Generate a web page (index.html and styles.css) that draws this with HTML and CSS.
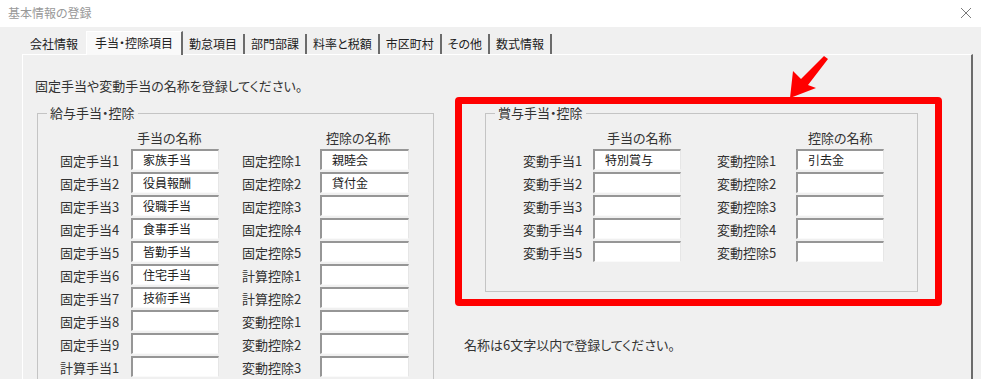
FILE: index.html
```html
<!DOCTYPE html>
<html lang="ja">
<head>
    <meta charset="UTF-8">
    <title>基本情報の登録</title>
    <link rel="stylesheet" href="styles.css">
</head>
<body>
    <div class="titlebar">
        <span class="title">基本情報の登録</span>
        <svg class="close" width="12" height="12" viewBox="0 0 12 12">
            <path d="M1 1 L11 11 M11 1 L1 11" stroke="#7a7a7a" stroke-width="1" fill="none"/>
        </svg>
    </div>

    <div class="tabs">
        <div class="tab">会社情報</div>
        <div class="tab active">手当・控除項目</div>
        <div class="tab">勤怠項目</div>
        <div class="tab">部門部課</div>
        <div class="tab">料率と税額</div>
        <div class="tab">市区町村</div>
        <div class="tab">その他</div>
        <div class="tab">数式情報</div>
    </div>

    <div class="panel">
        <div class="col-left">
            <p class="intro">固定手当や変動手当の名称を登録してください。</p>
            <fieldset class="group group-left">
                <legend>給与手当・控除</legend>
                <div class="grid">
                    <span></span><span class="head">手当の名称</span><span></span><span class="head">控除の名称</span>
                    <label>固定手当1</label><div class="field">家族手当</div><label>固定控除1</label><div class="field">親睦会</div>
                    <label>固定手当2</label><div class="field">役員報酬</div><label>固定控除2</label><div class="field">貸付金</div>
                    <label>固定手当3</label><div class="field">役職手当</div><label>固定控除3</label><div class="field"></div>
                    <label>固定手当4</label><div class="field">食事手当</div><label>固定控除4</label><div class="field"></div>
                    <label>固定手当5</label><div class="field">皆勤手当</div><label>固定控除5</label><div class="field"></div>
                    <label>固定手当6</label><div class="field">住宅手当</div><label>計算控除1</label><div class="field"></div>
                    <label>固定手当7</label><div class="field">技術手当</div><label>計算控除2</label><div class="field"></div>
                    <label>固定手当8</label><div class="field"></div><label>変動控除1</label><div class="field"></div>
                    <label>固定手当9</label><div class="field"></div><label>変動控除2</label><div class="field"></div>
                    <label>計算手当1</label><div class="field"></div><label>変動控除3</label><div class="field"></div>
                </div>
            </fieldset>
        </div>

        <div class="col-right">
            <div class="highlight">
                <fieldset class="group group-right">
                    <legend>賞与手当・控除</legend>
                    <div class="grid">
                        <span></span><span class="head">手当の名称</span><span></span><span class="head">控除の名称</span>
                        <label>変動手当1</label><div class="field">特別賞与</div><label>変動控除1</label><div class="field">引去金</div>
                        <label>変動手当2</label><div class="field"></div><label>変動控除2</label><div class="field"></div>
                        <label>変動手当3</label><div class="field"></div><label>変動控除3</label><div class="field"></div>
                        <label>変動手当4</label><div class="field"></div><label>変動控除4</label><div class="field"></div>
                        <label>変動手当5</label><div class="field"></div><label>変動控除5</label><div class="field"></div>
                    </div>
                </fieldset>
            </div>
            <p class="note">名称は6文字以内で登録してください。</p>
        </div>
    </div>

    <!-- 注目用の矢印 -->
    <svg class="arrow" width="55" height="55" viewBox="0 0 55 55">
        <polygon points="44,6 48,9 28,35 36,38 10,48 13,21 21,29" fill="#f00"/>
    </svg>
</body>
</html>
```

FILE: styles.css
```css
body {
    margin: 0;
    background-color: #f0f0f0;
    font-family: "Noto Sans CJK JP", "Noto Sans", sans-serif;
    font-feature-settings: "palt";
    color: #333;
    position: relative;
    height: 379px;
    overflow: hidden;
}
.titlebar {
    height: 27px;
    background-color: #fff;
    display: flex;
    align-items: center;
    justify-content: space-between;
    padding: 0 9px 2px 8px;
    box-sizing: border-box;
}
.title {
    font-size: 12px;
    color: #999;
}
.tabs {
    display: flex;
    align-items: flex-end;
    height: 27px;
    padding-left: 24px;
    box-sizing: border-box;
    position: relative;
    z-index: 1;
}
.tab {
    height: 20px;
    line-height: 20px;
    padding: 0 6px;
    font-size: 12px;
    color: #222;
    border-right: 2px solid #6b6b6b;
    box-sizing: border-box;
}
.tab:first-child {
    border-right: none;
    padding-right: 8px;
}
.active {
    height: 24px;
    line-height: 22px;
    padding: 0 8px;
    margin-bottom: -1px;
    background-color: #f9f9f9;
    border-left: 1px solid #fff;
    border-top: 1px solid #fff;
}
.panel {
    display: flex;
    align-items: flex-start;
    margin-left: 22px;
    width: 951px;
    height: 325px;
    overflow: hidden;
    box-sizing: border-box;
    padding-left: 14px;
    border-top: 1px solid #fff;
    border-left: 1px solid #fff;
    border-right: 2px solid #6b6b6b;
}
.col-left {
    width: 397px;
}
.intro {
    margin: 22px 0 0 -2px;
    font-size: 13px;
    line-height: 18px;
}
.group {
    margin: 9px 0 0;
    padding: 0;
    min-width: 0;
    border: 1px solid #c4c4c4;
}
.group legend {
    margin-left: 9px;
    padding: 0 3px;
    font-size: 13px;
    line-height: 18px;
}
.grid {
    display: grid;
    row-gap: 2px;
    align-items: center;
    padding-top: 7px;
    font-size: 13px;
}
/* 2列目のラベルは4列目へ（3列目は間隔用） */
.grid > :nth-child(4n+3) {
    grid-column: 4;
}
.group-left {
    width: 397px;
    box-sizing: border-box;
}
.group-left .grid {
    grid-template-columns: 71px 88px 23px 78px 89px;
    padding-left: 22px;
    padding-bottom: 20px;
}
.head {
    line-height: 18px;
    padding-left: 6px;
}
.grid label {
    line-height: 21px;
    height: 21px;
    padding-top: 1px;
    box-sizing: border-box;
    white-space: nowrap;
}
.field {
    height: 21px;
    box-sizing: border-box;
    background-color: #fff;
    border-top: 2px solid #969696;
    border-left: 2px solid #969696;
    border-right: 1px solid #e6e6e6;
    border-bottom: 1px solid #fafafa;
    padding-left: 10px;
    font-size: 12px;
    line-height: 17px;
    color: #222;
}
.col-right {
    margin-left: 21px;
}
.highlight {
    margin-top: 42px;
    width: 487px;
    box-sizing: border-box;
    border: 7px solid #f00;
    border-radius: 4px;
    padding: 0 17px 7px 23px;
}
.group-right {
    margin-top: 0;
}
.group-right .grid {
    grid-template-columns: 70px 88px 36px 79px 88px;
    padding-left: 37px;
    padding-bottom: 29px;
}
.group-right .grid > span:first-child + .head {
    padding-left: 14px;
}
.group-right .grid > .head {
    padding-left: 12px;
}
.note {
    margin: 30px 0 0 9px;
    font-size: 13px;
    line-height: 18px;
}
.arrow {
    position: absolute;
    left: 780px;
    top: 50px;
}
```
